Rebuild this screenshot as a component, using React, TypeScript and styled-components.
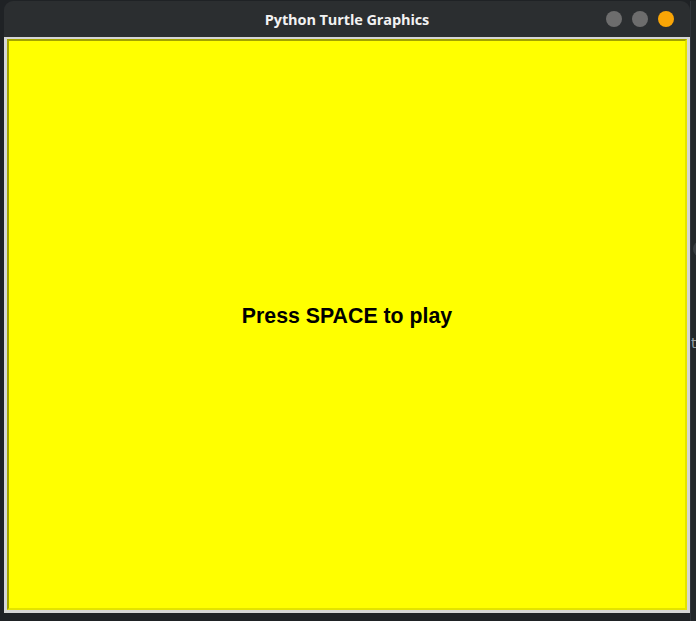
import React from 'react';
import styled, { createGlobalStyle } from "styled-components";

const GlobalStyle = createGlobalStyle`
  html, body {
    margin: 0;
    padding: 0;
    background: #1f2225;
    overflow: hidden;
  }
`

export default function App() {
    return (
        <Desktop>
            <GlobalStyle/>
            <Window>
                <TitleBar>
                    <Title>Python Turtle Graphics</Title>
                    <Controls>
                        <Dot/>
                        <Dot/>
                        <Dot active/>
                    </Controls>
                </TitleBar>
                <Frame>
                    <Canvas>
                        <Message>Press SPACE to play</Message>
                    </Canvas>
                </Frame>
            </Window>
            <SideStrip>
                <SideKnob/>
                <SideText>to</SideText>
            </SideStrip>
        </Desktop>
    )
}

const Desktop = styled.div`
  display: flex;
  width: 696px;
  height: 621px;
  padding: 1px 0 0 4px;
  box-sizing: border-box;
  background: #1f2225;
`
const Window = styled.div`
  display: flex;
  flex-direction: column;
  width: 686px;
  height: 612px;
`
const TitleBar = styled.div`
  position: relative;
  height: 36px;
  flex: none;
  display: flex;
  align-items: center;
  justify-content: center;
  background: #2b2e30;
  border-radius: 9px 9px 0 0;
`
const Title = styled.span`
  font-family: "Open Sans", "DejaVu Sans", sans-serif;
  font-weight: 700;
  font-size: 14.5px;
  color: #f2f2f2;
  letter-spacing: -0.1px;
`
const Controls = styled.div`
  position: absolute;
  right: 16px;
  top: 10px;
  display: flex;
  gap: 10px;
`
const Dot = styled.div<{ active?: boolean }>`
  width: 16px;
  height: 16px;
  border-radius: 50%;
  background: ${p => p.active ? "#f9a506" : "#6d6d6d"};
`
const Frame = styled.div`
  flex: 1;
  display: flex;
  padding: 2px 3px 3px 3px;
  background: #d6d6d4;
`
const Canvas = styled.div`
  flex: 1;
  display: flex;
  justify-content: center;
  padding-top: 263px;
  background: #ffff00;
  border-style: solid;
  border-width: 2px;
  border-color: #a3a300 #e3e300 #e3e300 #a3a300;
`
const Message = styled.div`
  font-family: "Liberation Sans", Arial, sans-serif;
  font-weight: 700;
  font-size: 21.3px;
  color: #000;
  height: 24px;
`
const SideStrip = styled.div`
  flex: 1;
  display: flex;
  flex-direction: column;
  overflow: hidden;
  background: #23272a;
  padding-top: 240px;
  border-left: 1px solid #30343a;
`
const SideKnob = styled.div`
  width: 16px;
  height: 16px;
  margin-left: 2px;
  border-radius: 50%;
  background: #3a3e42;
`
const SideText = styled.span`
  margin-top: 78px;
  font-family: "DejaVu Sans", sans-serif;
  font-size: 14px;
  color: #9aa0a4;
`
